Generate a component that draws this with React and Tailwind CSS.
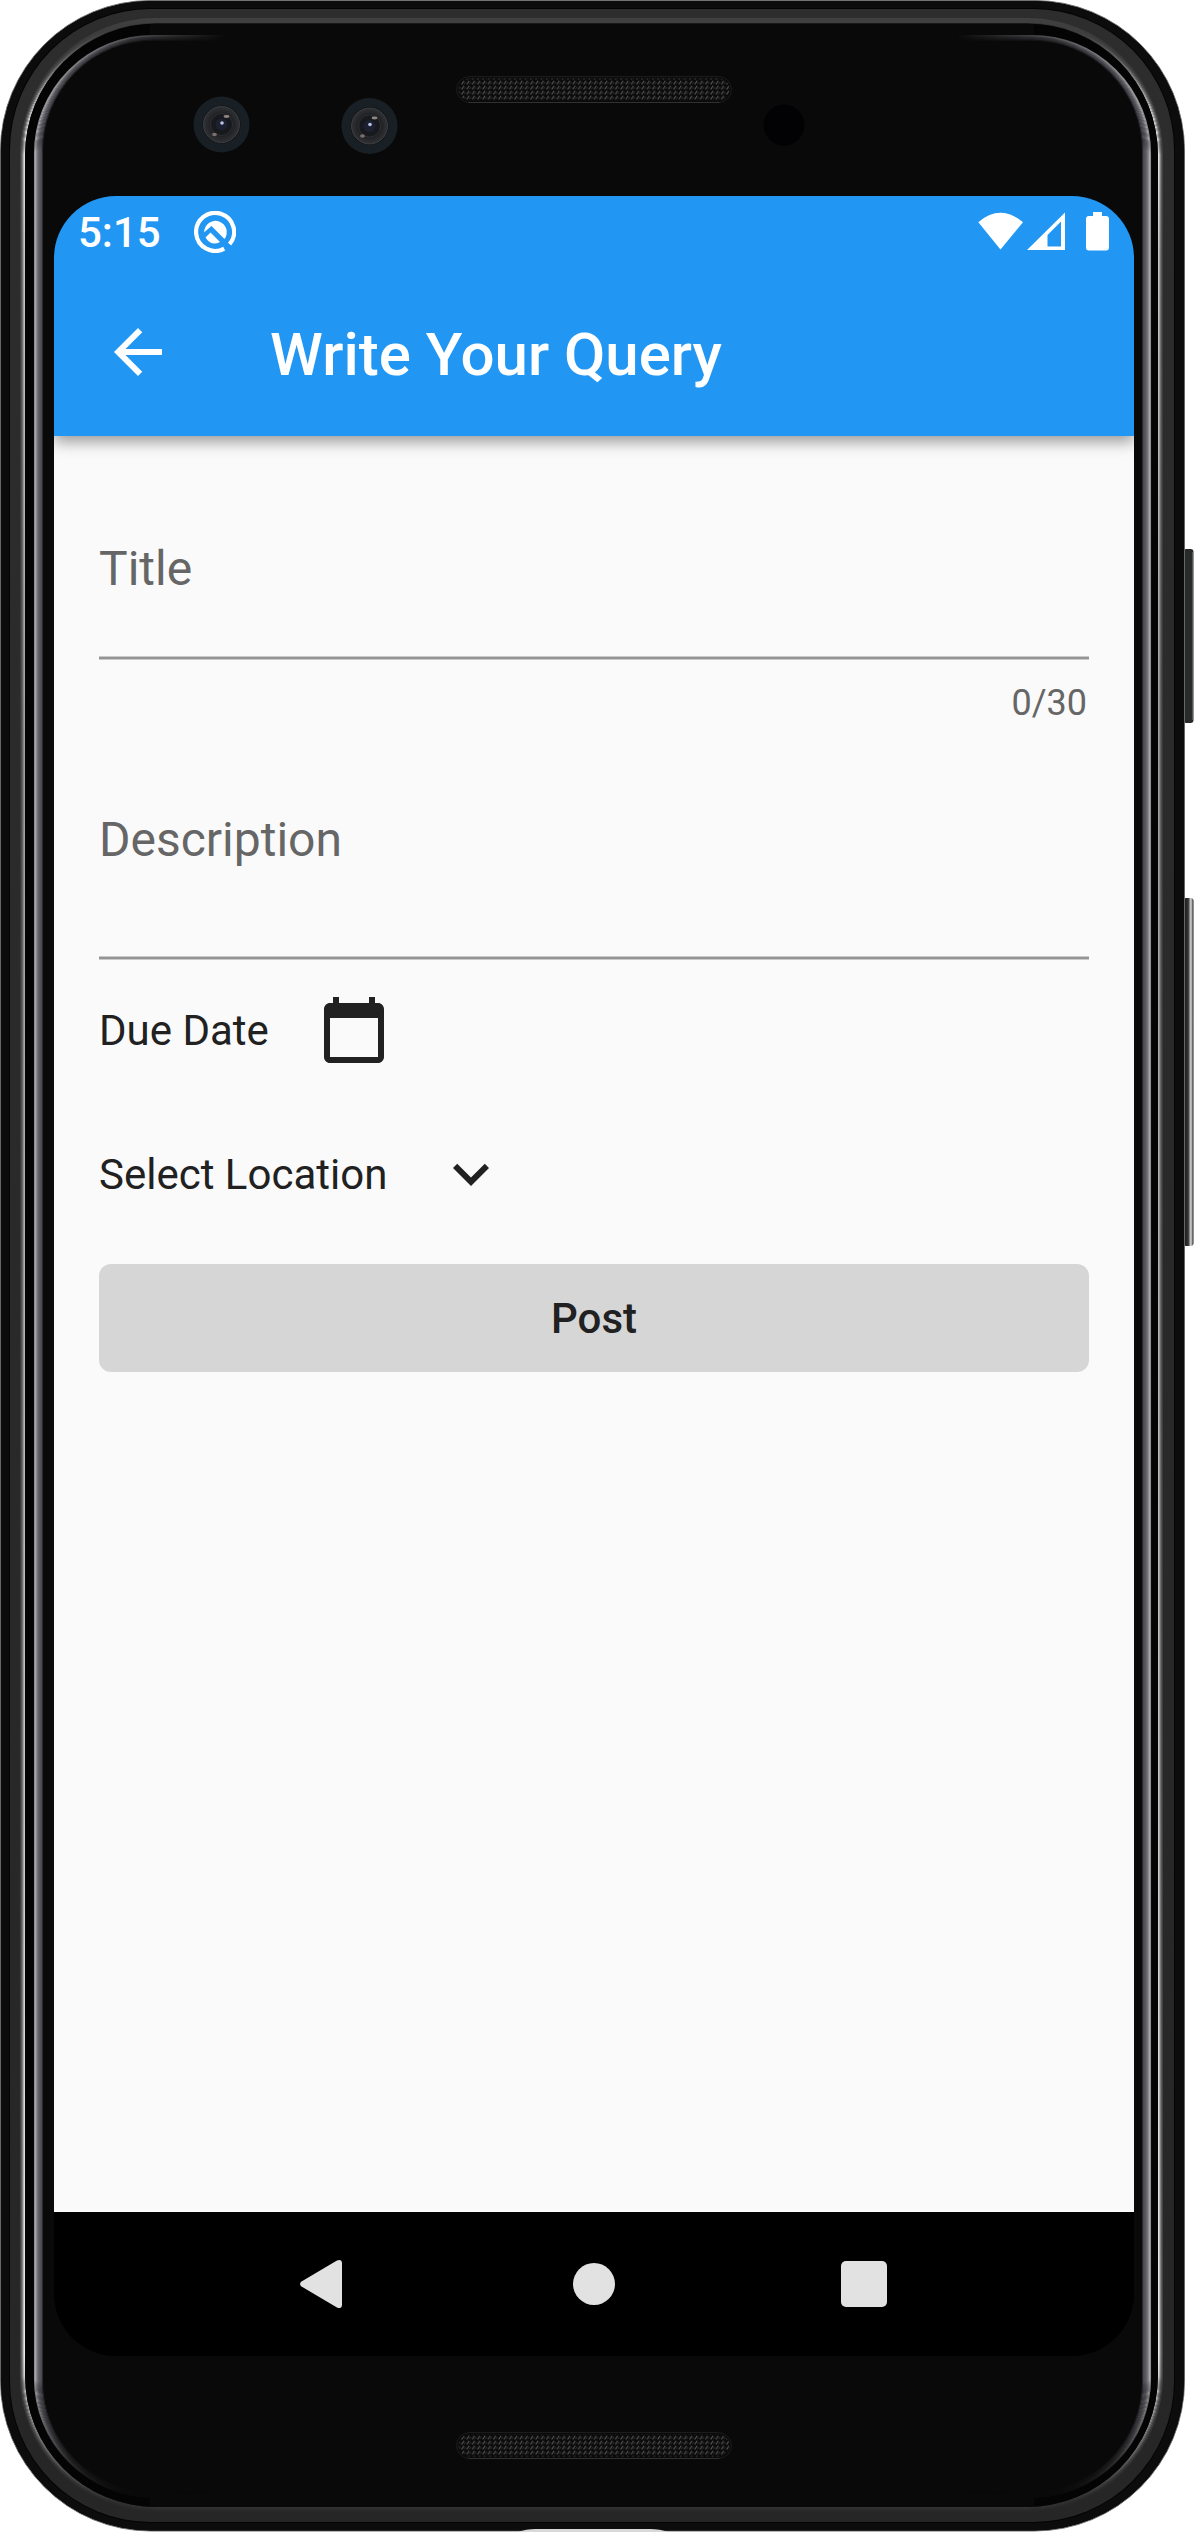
import React from "react";

const RIM = [
  ["#f0f0f0", 0.5],
  ["#c4c4c4", 1.5],
  ["#8a8a8a", 2.5],
  ["#616161", 3.5],
  ["#444444", 4.5],
];
const GLASS = ["#8d8d91", "#a9a9ad", "#8a8a8f", "#75757b", "#65656c", "#595960", "#52525a", "#4a4a52", "#2a2a2e"];

function Grille({ x, y }) {
  return (
    <g>
      <rect x={x} y={y} width="275" height="26" rx="13" fill="#0b0b0b" stroke="#1c1c1c" />
      <rect x={x + 2} y={y + 2} width="271" height="22" rx="11" fill="url(#mesh)" />
      <path d={`M${x + 12} ${y + 26}H${x + 263}`} stroke="#303030" />
    </g>
  );
}

function Camera({ x, y }) {
  return (
    <g>
      <circle cx={x} cy={y} r="28" fill="#192025" />
      <circle cx={x} cy={y} r="19" fill="#0d0e10" />
      <circle cx={x} cy={y} r="18" fill="url(#lens)" stroke="#3c3e41" strokeWidth="1" />
      <circle cx={x} cy={y} r="11" fill="#17191d" stroke="#2d3036" />
      <circle cx={x} cy={y} r="6" fill="#1d2030" />
      <circle cx={x + 0.5} cy={y - 1.5} r="1.8" fill="#b9c4e4" />
      <ellipse cx={x + 5} cy={y - 8} rx="3" ry="1.4" fill="#8f8583" />
      <ellipse cx={x - 7} cy={y + 10} rx="2.4" ry="1.8" fill="#7b706f" />
    </g>
  );
}

function PhoneBody() {
  return (
    <svg className="absolute inset-0" width="1194" height="2532" viewBox="0 0 1194 2532" aria-hidden="true">
      <defs>
        <pattern id="mesh" width="5.3" height="5" patternUnits="userSpaceOnUse">
          <path d="M0.5 4.5L2.8 0.8" stroke="#555" strokeWidth="1.1" />
          <path d="M3 4L4.6 2" stroke="#2c2c2c" strokeWidth="1.1" />
        </pattern>
        <radialGradient id="lens">
          <stop offset="0.5" stopColor="#191b1e" />
          <stop offset="1" stopColor="#303235" />
        </radialGradient>
        <linearGradient id="band" x1="0" y1="0" x2="0" y2="2532" gradientUnits="userSpaceOnUse">
          <stop offset="0" stopColor="#2d2d2d" />
          <stop offset="1" stopColor="#262626" />
        </linearGradient>
        <linearGradient id="topEdge" x1="0" y1="18" x2="0" y2="120" gradientUnits="userSpaceOnUse">
          <stop offset="0" stopColor="#404040" />
          <stop offset="1" stopColor="#404040" stopOpacity="0" />
        </linearGradient>
        <linearGradient id="rimFade" x1="0" y1="0" x2="0" y2="2532" gradientUnits="userSpaceOnUse">
          <stop offset="0.012" stopColor="#000" />
          <stop offset="0.045" stopColor="#fff" />
          <stop offset="0.1" stopColor="#ccc" />
          <stop offset="0.3" stopColor="#999" />
          <stop offset="0.7" stopColor="#ccc" />
          <stop offset="0.93" stopColor="#fff" />
          <stop offset="0.988" stopColor="#111" />
        </linearGradient>
        <linearGradient id="glassX" x1="0" y1="0" x2="1194" y2="0" gradientUnits="userSpaceOnUse">
          <stop offset="0.04" stopColor="#fff" />
          <stop offset="0.11" stopColor="#777" />
          <stop offset="0.19" stopColor="#000" />
          <stop offset="0.8" stopColor="#000" />
          <stop offset="0.88" stopColor="#777" />
          <stop offset="0.95" stopColor="#fff" />
        </linearGradient>
        <linearGradient id="glassY" x1="0" y1="2380" x2="0" y2="2496" gradientUnits="userSpaceOnUse">
          <stop offset="0" stopColor="#000" stopOpacity="0" />
          <stop offset="1" stopColor="#000" />
        </linearGradient>
        <mask id="rimMask" maskUnits="userSpaceOnUse" x="0" y="0" width="1194" height="2532">
          <rect width="1194" height="2532" fill="url(#rimFade)" />
        </mask>
        <mask id="glassMask" maskUnits="userSpaceOnUse" x="0" y="0" width="1194" height="2532">
          <rect width="1194" height="2532" fill="url(#glassX)" />
          <rect y="2380" width="1194" height="152" fill="url(#glassY)" />
        </mask>
        <linearGradient id="keyLight" x1="0" y1="0" x2="1" y2="0">
          <stop offset="0" stopColor="#151515" />
          <stop offset="0.5" stopColor="#333" />
          <stop offset="0.75" stopColor="#dcdcdc" />
          <stop offset="1" stopColor="#222" />
        </linearGradient>
      </defs>
      <rect x="1183" y="549" width="10.5" height="174" rx="3" fill="#292b2a" />
      <path d="M1192.5 552V720" stroke="#555" />
      <rect x="1183" y="898" width="10.5" height="348" rx="3" fill="url(#keyLight)" />
      <rect x="0.5" y="0.5" width="1184" height="2530.5" rx="150" fill="#0c0c0c" stroke="#6f7371" />
      <rect x="0.9" y="1" width="1183.2" height="2529.5" rx="150" fill="#0c0c0c" />
      <rect x="9" y="8" width="1166" height="2515" rx="142" fill="#040404" />
      <rect x="10" y="9" width="1164" height="2513" rx="141" fill="url(#band)" />
      <rect x="22.5" y="20.5" width="1138" height="2489" rx="133" fill="none" stroke="url(#topEdge)" strokeWidth="5" />
      <g mask="url(#rimMask)" fill="none">
        {RIM.map(([color, d]) => (
          <rect key={d} x={25 - d} y={24 - d} width={1133 + 2 * d} height={2483 + 2 * d} rx={131 + d} stroke={color} strokeWidth="1.1" />
        ))}
      </g>
      <rect x="25" y="23.5" width="1133" height="2483.5" rx="131" fill="#040404" />
      <rect x="34" y="35" width="1117" height="2463" rx="118" fill="#090909" />
      <path d="M150 29.5H1034M150 2501.500H1034" stroke="#090909" strokeWidth="11" />
      <g mask="url(#glassMask)" fill="none">
        {GLASS.map((color, i) => (
          <rect
            key={i}
            x={34.5 + i}
            y={35.5 + i * 0.6}
            width={1116 - 2 * i}
            height={2461 - 1.2 * i}
            rx={118 - i}
            stroke={color}
            strokeWidth="1.1"
          />
        ))}
      </g>
      <Camera x={221.5} y={124.5} />
      <Camera x={369.5} y={126} />
      <circle cx="784" cy="125" r="20.5" fill="#020204" />
      <Grille x={456.5} y={76.5} />
      <Grille x={456.5} y={2432.5} />
      <path d="M518 2532Q526 2529 536 2529H650Q660 2529 668 2532Z" fill="#d8d8d8" />
    </svg>
  );
}

function StatusBar() {
  return (
    <div className="flex h-[72px] items-center justify-between pl-[24px] pr-[24px] text-white">
      <div className="flex items-center">
        <span className="w-[86px] pt-[2px] text-[42px] leading-[50px] font-medium">5:15</span>
        <svg className="ml-[30px]" width="42" height="42" viewBox="0 0 42 42" fill="none">
          <path d="M30.2 37.6A19 19 0 1 1 35.6 33.2" stroke="#fff" strokeWidth="4.2" />
          <path d="M10.200 21.200A11.300 11.300 0 1 1 30.500 28L17.500 15Z" fill="#fff" />
          <path d="M11.500 26.500L16.500 21.500L26 31Q17 35.500 11.500 26.500Z" fill="#fff" />
        </svg>
      </div>
      <svg width="132" height="40" viewBox="0 0 132 40" fill="#fff">
        <path d="M0.3 10.2Q22.5 -8.5 45 10.2L22.5 37.5Z" />
        <path fillRule="evenodd" d="M49 38L87 0.5V38ZM69.500 34.500H83V9.500L69.500 23Z" />
        <path d="M115 0H124V4H128Q131 4 131 7V35.500Q131 38.500 128 38.500H111Q108 38.500 108 35.500V7Q108 4 111 4H115Z" />
      </svg>
    </div>
  );
}

function Field({ label, gap }) {
  return (
    <div className="flex flex-col">
      <label className="text-[48px] leading-[56px] text-[#666666]">{label}</label>
      <div className={`${gap} h-[4px] border-y border-[#c9c9c9] bg-[#949494]`} />
    </div>
  );
}

export default function App() {
  return (
    <div className="relative h-[2532px] w-[1194px] overflow-hidden bg-white pt-[196px] pl-[54px] font-[Roboto,sans-serif]">
      <PhoneBody />
      <div className="relative flex h-[2160px] w-[1080px] flex-col overflow-hidden rounded-[62px]">
        <header className="relative z-10 h-[240px] shrink-0 bg-[#2196f3] shadow-[0_6px_14px_rgba(0,0,0,0.38)]">
          <StatusBar />
          <div className="flex h-[168px] items-center pl-[48px] text-white">
            <svg width="72" height="72" viewBox="0 0 24 24" fill="#fff">
              <path d="M20 11H7.83l5.59-5.59L12 4l-8 8 8 8 1.41-1.41L7.83 13H20v-2z" />
            </svg>
            <h1 className="ml-[96px] pt-[5px] text-[60px] leading-[70px] font-medium">Write Your Query</h1>
          </div>
        </header>
        <main className="flex flex-1 flex-col bg-[#fafafa] px-[45px] pt-[105px]">
          <Field label="Title" gap="mt-[59px]" />
          <div className="mt-[22px] self-end pr-[2px] text-[36px] leading-[42px] text-[#666666]">0/30</div>
          <div className="mt-[88px]">
            <Field label="Description" gap="mt-[88px]" />
          </div>
          <div className="-mt-[2px] flex h-[144px] items-center text-[#212121]">
            <span className="w-[219px] pt-[2px] text-[42px] leading-[50px]">Due Date</span>
            <svg width="72" height="72" viewBox="0 0 24 24" fill="currentColor">
              <path d="M20 3h-1V1h-2v2H7V1H5v2H4c-1.100 0-2 .9-2 2v16c0 1.100.9 2 2 2h16c1.100 0 2-.9 2-2V5c0-1.100-.9-2-2-2zm0 18H4V8h16v13z" />
            </svg>
          </div>
          <div className="flex h-[144px] items-center text-[#212121]">
            <span className="w-[336px] pt-[2px] text-[42px] leading-[50px]">Select Location</span>
            <svg width="72" height="72" viewBox="0 0 24 24" fill="currentColor">
              <path d="M7.410 8.590L12 13.170l4.590-4.580L18 10l-6 6-6-6 1.410-1.410z" />
            </svg>
          </div>
          <button className="mt-[18px] h-[108px] rounded-[12px] bg-[#d6d6d6] pt-[2px] text-[42px] leading-[50px] font-medium text-[#212121]">
            Post
          </button>
        </main>
        <nav className="flex h-[144px] shrink-0 items-center justify-between bg-black px-[234px]">
          <svg width="72" height="72" viewBox="0 0 72 72" fill="#e2e2e2">
            <path d="M13.500 33.600L49 12.500Q54 10.500 54 15.500V56.500Q54 61.500 49 59.500L13.500 38.400Q10.500 36 13.500 33.600Z" />
          </svg>
          <div className="h-[42px] w-[42px] rounded-full bg-[#e2e2e2]" />
          <div className="flex w-[72px] justify-center">
            <div className="h-[46px] w-[46px] rounded-[5px] bg-[#e2e2e2]" />
          </div>
        </nav>
      </div>
    </div>
  );
}
